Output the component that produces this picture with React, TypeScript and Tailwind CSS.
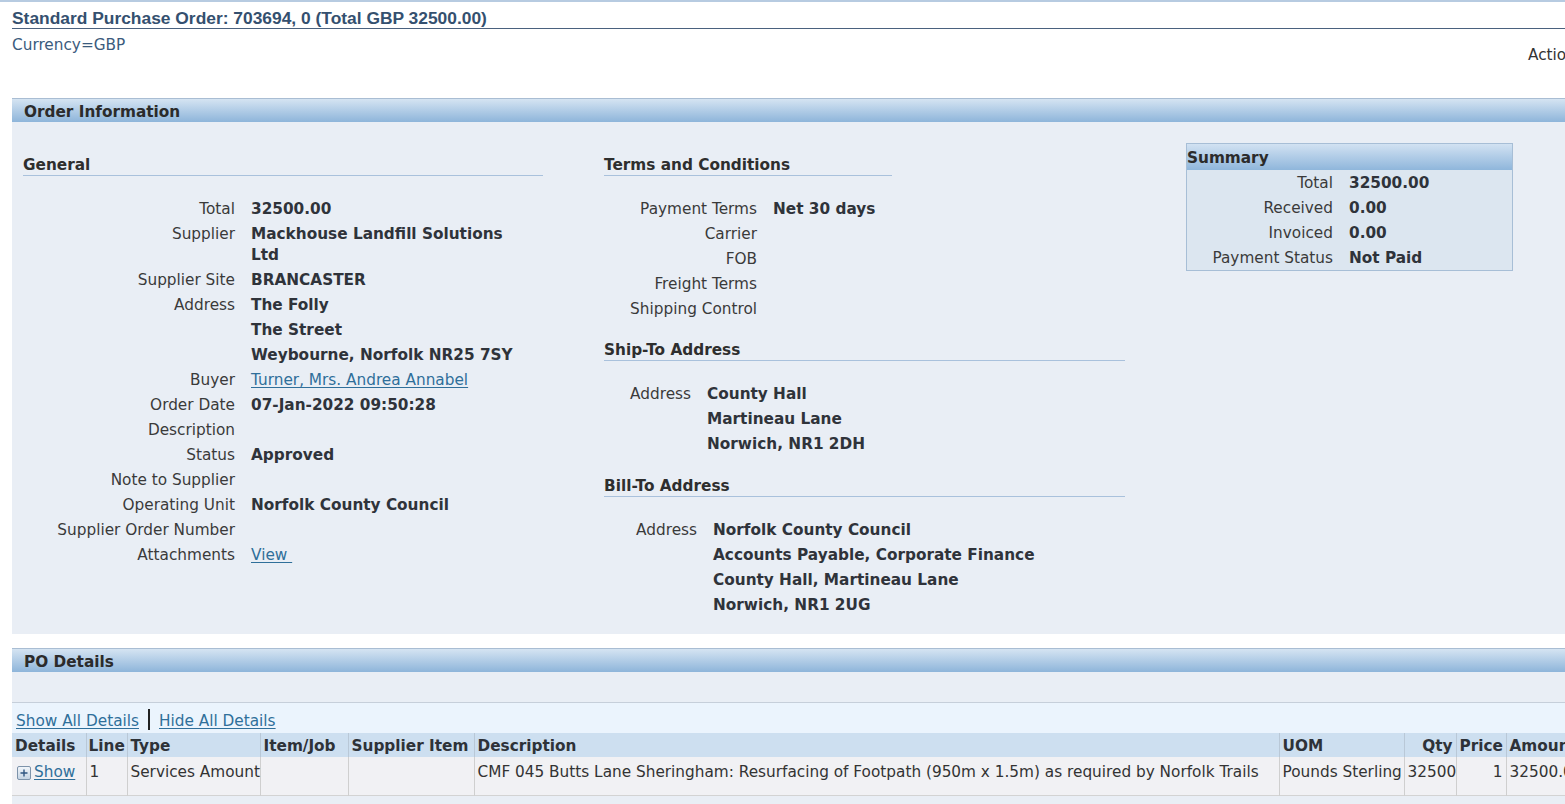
import React from "react";

type RowProps = {
  label: string;
  value?: React.ReactNode;
  lw: string;
  vw?: string;
};

function Row({ label, value, lw, vw = "w-[291px]" }: RowProps) {
  return (
    <div className="flex pt-[3px] pb-[1px] leading-[21px]">
      <div className={`${lw} shrink-0 text-right text-[#3a3a3a]`}>{label}</div>
      <div className={`${vw} shrink-0 pl-4 font-bold text-[#2f333a]`}>{value}</div>
    </div>
  );
}

function Link({ children }: { children: React.ReactNode }) {
  return <span className="font-normal text-[#2f6f9a] underline underline-offset-2">{children}</span>;
}

function Heading({ title, w }: { title: string; w: string }) {
  return (
    <div className={`${w} border-b border-[#a9c1dc] pt-[2px] font-bold leading-[19px] text-[#2e2e2e]`}>{title}</div>
  );
}

function Bar({ title }: { title: string }) {
  return (
    <div className="h-[24px] border-t border-[#a9bdd3] bg-linear-to-b from-[#d5e4f2] to-[#8eb5da] pl-[12px] pt-[3px] font-bold leading-[20px] text-[#2b2b2b]">
      {title}
    </div>
  );
}

function PlusIcon() {
  return (
    <svg width="14" height="14" viewBox="0 0 14 14" className="inline-block">
      <defs>
        <linearGradient id="pg" x1="0" y1="0" x2="0" y2="1">
          <stop offset="0" stopColor="#f3f7fb" />
          <stop offset="1" stopColor="#c3d3e3" />
        </linearGradient>
      </defs>
      <rect x="0.5" y="0.5" width="13" height="13" rx="1.5" fill="url(#pg)" stroke="#7d93aa" />
      <path d="M3.5 7h7M7 3.5v7" stroke="#2f5681" strokeWidth="1.4" />
    </svg>
  );
}

export default function App() {
  const th = "border-r border-[#b9c8d7] px-[3px] pt-[2px] text-left font-bold whitespace-nowrap";
  const td = "border-r border-[#cfcfcf] px-[3px] pt-[5px] pb-[9px] align-top whitespace-nowrap";
  return (
    <div className="h-[804px] w-[1565px] overflow-hidden bg-white font-['DejaVu_Sans',sans-serif] text-[15.3px] text-[#333]">
      <div className="w-[1600px]">
        <div className="h-[2px] bg-[#b7cbe1]" />
        <div className="ml-[12px] border-b border-[#4a617e] pt-[7px] font-['Liberation_Sans',Arial,sans-serif] text-[17.4px] font-bold leading-[19px] text-[#34506f]">
          Standard Purchase Order: 703694, 0 (Total GBP 32500.00)
        </div>
        <div className="ml-[12px] mt-[7px] flex leading-[18px]">
          <div className="w-[1516px] text-[#3b5b7d]">Currency=GBP</div>
          <div className="pt-[10px] text-[#333]">Actions</div>
        </div>

        <div className="ml-[12px] mt-[34px]">
          <Bar title="Order Information" />
          <div className="flex items-start bg-[#e9eef5] pb-[17px] pl-[11px]">
            <div className="w-[520px] pt-[32px]">
              <Heading title="General" w="w-full" />
              <div className="mt-[20px]">
                <Row lw="w-[212px]" label="Total" value="32500.00" />
                <Row lw="w-[212px]" label="Supplier" value="Mackhouse Landfill Solutions Ltd" />
                <Row lw="w-[212px]" label="Supplier Site" value="BRANCASTER" />
                <Row lw="w-[212px]" label="Address" value="The Folly" />
                <Row lw="w-[212px]" label="" value="The Street" />
                <Row lw="w-[212px]" label="" value="Weybourne, Norfolk NR25 7SY" />
                <Row lw="w-[212px]" label="Buyer" value={<Link>Turner, Mrs. Andrea Annabel</Link>} />
                <Row lw="w-[212px]" label="Order Date" value="07-Jan-2022 09:50:28" />
                <Row lw="w-[212px]" label="Description" value="" />
                <Row lw="w-[212px]" label="Status" value="Approved" />
                <Row lw="w-[212px]" label="Note to Supplier" value="" />
                <Row lw="w-[212px]" label="Operating Unit" value="Norfolk County Council" />
                <Row lw="w-[212px]" label="Supplier Order Number" value="" />
                <Row lw="w-[212px]" label="Attachments" value={<Link>View&nbsp;</Link>} />
              </div>
            </div>

            <div className="ml-[61px] w-[521px] pt-[32px]">
              <Heading title="Terms and Conditions" w="w-[288px]" />
              <div className="mt-[20px]">
                <Row lw="w-[153px]" vw="w-[300px]" label="Payment Terms" value="Net 30 days" />
                <Row lw="w-[153px]" vw="w-[300px]" label="Carrier" value="" />
                <Row lw="w-[153px]" vw="w-[300px]" label="FOB" value="" />
                <Row lw="w-[153px]" vw="w-[300px]" label="Freight Terms" value="" />
                <Row lw="w-[153px]" vw="w-[300px]" label="Shipping Control" value="" />
              </div>
              <div className="mt-[18px]">
                <Heading title="Ship-To Address" w="w-full" />
              </div>
              <div className="mt-[20px]">
                <Row lw="w-[87px]" vw="w-[400px]" label="Address" value="County Hall" />
                <Row lw="w-[87px]" vw="w-[400px]" label="" value="Martineau Lane" />
                <Row lw="w-[87px]" vw="w-[400px]" label="" value="Norwich, NR1 2DH" />
              </div>
              <div className="mt-[19px]">
                <Heading title="Bill-To Address" w="w-full" />
              </div>
              <div className="mt-[20px]">
                <Row lw="w-[93px]" vw="w-[400px]" label="Address" value="Norfolk County Council" />
                <Row lw="w-[93px]" vw="w-[400px]" label="" value="Accounts Payable, Corporate Finance" />
                <Row lw="w-[93px]" vw="w-[400px]" label="" value="County Hall, Martineau Lane" />
                <Row lw="w-[93px]" vw="w-[400px]" label="" value="Norwich, NR1 2UG" />
              </div>
            </div>

            <div className="ml-[61px] mt-[21px] w-[327px] border border-[#a7bed6] bg-[#dce6f0]">
              <div className="h-[26px] bg-linear-to-b from-[#d2e2f2] to-[#8fb6db] pt-[2px] font-bold leading-[24px] text-[#2b2b2b]">
                Summary
              </div>
              <Row lw="w-[146px]" vw="w-[170px]" label="Total" value="32500.00" />
              <Row lw="w-[146px]" vw="w-[170px]" label="Received" value="0.00" />
              <Row lw="w-[146px]" vw="w-[170px]" label="Invoiced" value="0.00" />
              <Row lw="w-[146px]" vw="w-[170px]" label="Payment Status" value="Not Paid" />
            </div>
          </div>
        </div>

        <div className="ml-[12px] mt-[14px]">
          <Bar title="PO Details" />
          <div className="h-[30px] bg-[#e9eef5]" />
          <div className="flex h-[31px] items-start border-t border-[#c6cfda] bg-[#ebf4fd] pl-[4px] pt-[8px] leading-[21px]">
            <span className="text-[#2f6f9a] underline underline-offset-2">Show All Details</span>
            <span className="mx-[9px] mt-[-2px] h-[21px] w-[2px] bg-[#222]" />
            <span className="text-[#2f6f9a] underline underline-offset-2">Hide All Details</span>
          </div>
          <table className="w-[1574px] table-fixed border-collapse text-[#333]">
            <colgroup>
              <col className="w-[74px]" />
              <col className="w-[41px]" />
              <col className="w-[133px]" />
              <col className="w-[88px]" />
              <col className="w-[126px]" />
              <col className="w-[805px]" />
              <col className="w-[125px]" />
              <col className="w-[52px]" />
              <col className="w-[50px]" />
              <col className="w-[80px]" />
            </colgroup>
            <thead>
              <tr className="h-[24px] bg-[#cddff0] leading-[22px] text-[#2e3238]">
                <th className={th}>Details</th>
                <th className={`${th} pl-[2px]`}>Line</th>
                <th className={th}>Type</th>
                <th className={th}>Item/Job</th>
                <th className={th}>Supplier Item</th>
                <th className={th}>Description</th>
                <th className={th}>UOM</th>
                <th className={`${th} text-right`}>Qty</th>
                <th className={`${th} text-right`}>Price</th>
                <th className={th}>Amount</th>
              </tr>
            </thead>
            <tbody>
              <tr className="border-b border-[#d3d3d3] bg-[#f1f1f4] leading-[21px]">
                <td className={td}>
                  <span className="ml-[2px] inline-flex items-center gap-[3px]">
                    <PlusIcon />
                    <span className="text-[#2f6f9a] underline underline-offset-2">Show</span>
                  </span>
                </td>
                <td className={td}>1</td>
                <td className={td}>Services Amount</td>
                <td className={td}></td>
                <td className={td}></td>
                <td className={td}>
                  CMF 045 Butts Lane Sheringham: Resurfacing of Footpath (950m x 1.5m) as required by Norfolk Trails
                </td>
                <td className={td}>Pounds Sterling</td>
                <td className={`${td} text-right`}>32500</td>
                <td className={`${td} text-right`}>1</td>
                <td className={td}>32500.00</td>
              </tr>
            </tbody>
          </table>
          <div className="h-[20px] bg-[#e9eef5]" />
        </div>
      </div>
    </div>
  );
}
